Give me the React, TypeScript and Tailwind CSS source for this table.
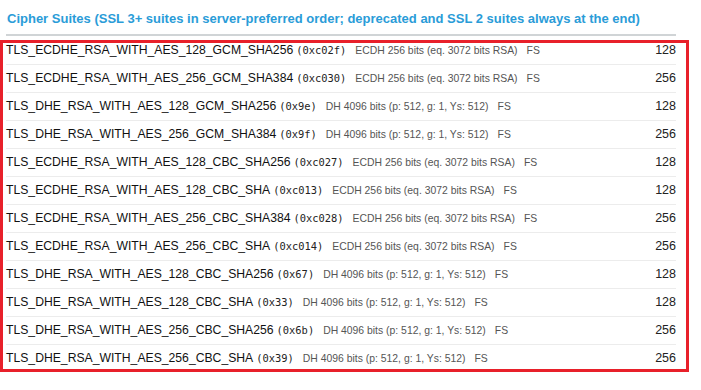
const suites = [
  { name: 'TLS_ECDHE_RSA_WITH_AES_128_GCM_SHA256', code: '0xc02f', kx: 'ECDH 256 bits (eq. 3072 bits RSA)', bits: 128 },
  { name: 'TLS_ECDHE_RSA_WITH_AES_256_GCM_SHA384', code: '0xc030', kx: 'ECDH 256 bits (eq. 3072 bits RSA)', bits: 256 },
  { name: 'TLS_DHE_RSA_WITH_AES_128_GCM_SHA256', code: '0x9e', kx: 'DH 4096 bits (p: 512, g: 1, Ys: 512)', bits: 128 },
  { name: 'TLS_DHE_RSA_WITH_AES_256_GCM_SHA384', code: '0x9f', kx: 'DH 4096 bits (p: 512, g: 1, Ys: 512)', bits: 256 },
  { name: 'TLS_ECDHE_RSA_WITH_AES_128_CBC_SHA256', code: '0xc027', kx: 'ECDH 256 bits (eq. 3072 bits RSA)', bits: 128 },
  { name: 'TLS_ECDHE_RSA_WITH_AES_128_CBC_SHA', code: '0xc013', kx: 'ECDH 256 bits (eq. 3072 bits RSA)', bits: 128 },
  { name: 'TLS_ECDHE_RSA_WITH_AES_256_CBC_SHA384', code: '0xc028', kx: 'ECDH 256 bits (eq. 3072 bits RSA)', bits: 256 },
  { name: 'TLS_ECDHE_RSA_WITH_AES_256_CBC_SHA', code: '0xc014', kx: 'ECDH 256 bits (eq. 3072 bits RSA)', bits: 256 },
  { name: 'TLS_DHE_RSA_WITH_AES_128_CBC_SHA256', code: '0x67', kx: 'DH 4096 bits (p: 512, g: 1, Ys: 512)', bits: 128 },
  { name: 'TLS_DHE_RSA_WITH_AES_128_CBC_SHA', code: '0x33', kx: 'DH 4096 bits (p: 512, g: 1, Ys: 512)', bits: 128 },
  { name: 'TLS_DHE_RSA_WITH_AES_256_CBC_SHA256', code: '0x6b', kx: 'DH 4096 bits (p: 512, g: 1, Ys: 512)', bits: 256 },
  { name: 'TLS_DHE_RSA_WITH_AES_256_CBC_SHA', code: '0x39', kx: 'DH 4096 bits (p: 512, g: 1, Ys: 512)', bits: 256 },
]

function SuiteRow({ name, code, kx, bits }: { name: string; code: string; kx: string; bits: number }) {
  return (
    <div className="flex h-[28px] items-center border-t border-[#ececec] first:border-t-0">
      <div className="flex flex-1 items-baseline whitespace-nowrap">
        <span className="text-[12.2px] text-[#111]">{name}</span>
        <span className="ml-[3px] font-['DejaVu_Sans_Mono',monospace] text-[10.4px] text-[#222]">({code})</span>
        <span className="ml-[9px] text-[10.4px] text-[#555]">{kx}</span>
        <span className="ml-[9px] text-[10.4px] text-[#555]">FS</span>
      </div>
      <div className="text-[12.5px] text-[#222]">{bits}</div>
    </div>
  )
}

export default function App() {
  return (
    <div className="relative h-[390px] w-[701px] overflow-hidden bg-white font-['Liberation_Sans',Arial,sans-serif]">
      <div className="w-[676px] pl-[6px]">
        <h3 className="whitespace-nowrap pt-[11px] pb-[7px] pl-px text-[13px] font-bold leading-[16px] text-[#2a9cd8]">
          Cipher Suites (SSL 3+ suites in server-preferred order; deprecated and SSL 2 suites always at the end)
        </h3>
        <div className="h-[2px] bg-[#d0d4d6]" />
        <div>
          {suites.map(s => <SuiteRow key={s.code} {...s} />)}
        </div>
      </div>
      {/* red highlight box drawn over the table */}
      <div className="pointer-events-none absolute left-0 top-[40px] h-[332px] w-[689px] border-[3px] border-[#e8202a]" />
    </div>
  )
}
